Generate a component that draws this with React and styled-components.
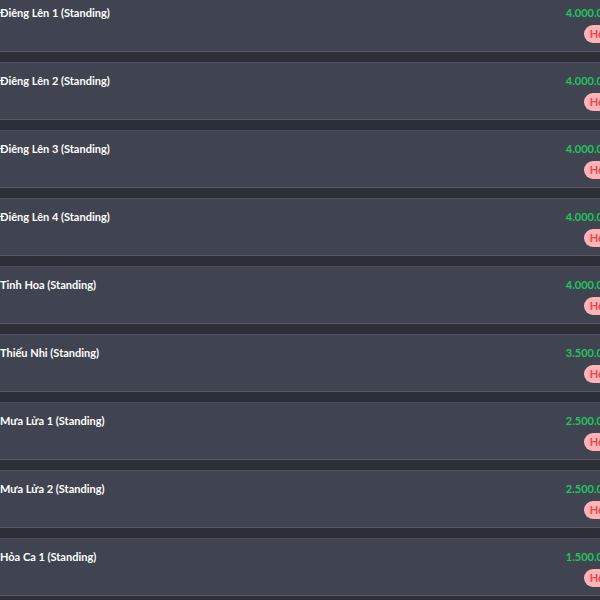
import React from 'react';
import styled, { createGlobalStyle } from 'styled-components';

const Global = createGlobalStyle`
  html, body {
    margin: 0;
    padding: 0;
    background: #2c2f38;
    overflow: hidden;
  }
  body {
    font-family: Lato, "Open Sans", sans-serif;
  }
`;

const List = styled.div`
  width: 640px;
  margin: -6px 0 0 -12px;
  display: flex;
  flex-direction: column;
  gap: 10px;
`;

const Card = styled.div`
  background: #404450;
  border-top: 1px solid #4d515d;
  border-bottom: 1px solid #565a66;
  padding: 10px 6px 8px 12px;
  display: flex;
  justify-content: space-between;
  align-items: flex-start;
`;

const Name = styled.div`
  color: #ffffff;
  font-size: 11px;
  font-weight: 700;
  line-height: 16px;
`;

const Side = styled.div`
  display: flex;
  flex-direction: column;
  align-items: flex-end;
  gap: 4px;
`;

const Price = styled.div`
  color: #22c55e;
  font-size: 11px;
  font-weight: 700;
  line-height: 16px;
`;

const Badge = styled.span`
  background: #fdb4b9;
  color: #e5484d;
  font-size: 11px;
  font-weight: 700;
  line-height: 18px;
  padding: 0 14px 0 6px;
  border-radius: 9px;
`;

const tickets = [
  { name: 'Điêng Lên 1 (Standing)', price: '4.000.000đ' },
  { name: 'Điêng Lên 2 (Standing)', price: '4.000.000đ' },
  { name: 'Điêng Lên 3 (Standing)', price: '4.000.000đ' },
  { name: 'Điêng Lên 4 (Standing)', price: '4.000.000đ' },
  { name: 'Tinh Hoa (Standing)', price: '4.000.000đ' },
  { name: 'Thiếu Nhi (Standing)', price: '3.500.000đ' },
  { name: 'Mưa Lửa 1 (Standing)', price: '2.500.000đ' },
  { name: 'Mưa Lửa 2 (Standing)', price: '2.500.000đ' },
  { name: 'Hỏa Ca 1 (Standing)', price: '1.500.000đ' },
];

export default function App() {
  return (
    <>
      <Global />
      <List>
        {tickets.map((t) => (
          <Card key={t.name}>
            <Name>{t.name}</Name>
            <Side>
              <Price>{t.price}</Price>
              <Badge>Hết</Badge>
            </Side>
          </Card>
        ))}
      </List>
    </>
  );
}
